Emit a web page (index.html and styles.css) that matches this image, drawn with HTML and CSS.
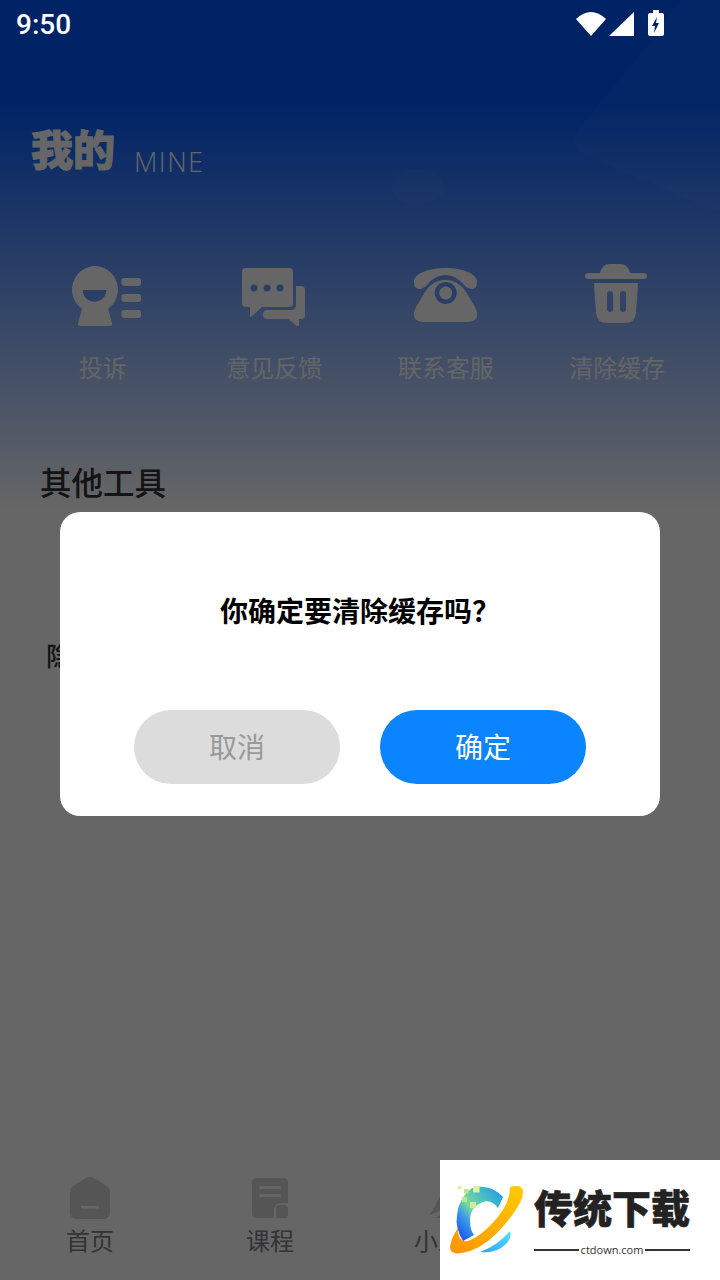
FILE: index.html
```html
<!DOCTYPE html>
<html lang="zh-CN">
<head>
  <meta charset="UTF-8" />
  <meta name="viewport" content="width=device-width, initial-scale=1.0"/>
  <title>我的</title>
  <link rel="stylesheet" href="styles.css">
</head>
<body>
<div class="page">
  <svg class="deco" viewBox="380 0 340 240">
    <path d="M652 40L578 130Q570 145 585 155L720 213V0H680Z" fill="#fff" fill-opacity="0.03"/>
    <ellipse cx="418" cy="187" rx="26" ry="18" fill="#fff" fill-opacity="0.03"/>
  </svg>

  <div class="head">
    <span class="head-title">我的</span>
    <span class="head-sub">MINE</span>
  </div>

  <div class="tools">
    <div class="tool">
      <svg class="tool-icon" viewBox="0 0 80 70">
        <path d="M31.500 3a23.500 23.500 0 0 1 13.500 42.700L49 60q1 3-3 3H18q-4 0-3-3l4-14.300A23.500 23.500 0 0 1 31.500 3z" fill="#fff"/>
        <path d="M19.700 27H43.300a11.800 11.800 0 0 1-23.600 0z" fill="#6a9dff"/>
        <rect x="58.500" y="15" width="19.500" height="8" rx="3" fill="#fff"/>
        <rect x="58.500" y="31" width="19.500" height="8" rx="3" fill="#fff"/>
        <rect x="58.500" y="47" width="19.500" height="8" rx="3" fill="#fff"/>
      </svg>
      <span class="tool-label">投诉</span>
    </div>
    <div class="tool">
      <svg class="tool-icon" viewBox="0 0 80 70">
        <path d="M12 5H55Q59 5 59 9V40Q59 44 55 44H28L18 53Q16 55 16 52V44H12Q8 44 8 40V9Q8 5 12 5z" fill="#fff"/>
        <circle cx="20" cy="25" r="3.500" fill="#6a9dff"/>
        <circle cx="33" cy="25" r="3.500" fill="#6a9dff"/>
        <circle cx="46" cy="25" r="3.500" fill="#6a9dff"/>
        <path d="M62 23H67Q71 23 71 27V52Q71 56 67 56H65V62Q65 64 63 63L54 56H33Q29 56 29 51.500Q29 47 33 47H57Q62 47 62 42z" fill="#fff"/>
      </svg>
      <span class="tool-label">意见反馈</span>
    </div>
    <div class="tool">
      <svg class="tool-icon" viewBox="0 0 80 70">
        <path d="M8 19C8 10 24 5 39.500 5C55 5 71 10 71 19Q71 26 66 26Q62 26 58 22Q50 12 39.500 12Q29 12 21 22Q17 26 13 26Q8 26 8 19z" fill="#fff"/>
        <path d="M39.500 17C50 17 56 23 60 29L69 44Q76 59 60 59H19Q3 59 10 44L19 29C23 23 29 17 39.500 17z" fill="#fff"/>
        <circle cx="39.700" cy="30" r="11" fill="#6a9dff"/>
        <circle cx="39.700" cy="30" r="6.500" fill="#fff"/>
      </svg>
      <span class="tool-label">联系客服</span>
    </div>
    <div class="tool">
      <svg class="tool-icon" viewBox="0 0 80 70">
        <path d="M23 10Q25 1 33 1H43Q51 1 53 10H67Q70 10 70 13T67 16H11Q8 16 8 13T11 10z" fill="#fff"/>
        <path d="M17 20H61L59 50Q58 60 48 60H30Q20 60 19 50z" fill="#fff"/>
        <rect x="30" y="28" width="6" height="21" rx="3" fill="#7aa8ff"/>
        <rect x="43" y="28" width="6" height="21" rx="3" fill="#7aa8ff"/>
      </svg>
      <span class="tool-label">清除缓存</span>
    </div>
  </div>

  <h3 class="section-title">其他工具</h3>
  <div class="other-list">
    <span class="other-item">隐私政策</span>
  </div>

  <div class="tabbar">
    <div class="tab">
      <svg class="tab-icon" viewBox="0 0 44 44">
        <path d="M22 1q2 0 4 1l14 9q2 2 2 4v21q0 7-7 7H9q-7 0-7-7V15q0-2 2-4L18 2q2-1 4-1z" fill="#d4d4d4"/>
        <rect x="13" y="30" width="18" height="2.500" rx="1" fill="#fff"/>
      </svg>
      <span>首页</span>
    </div>
    <div class="tab">
      <svg class="tab-icon" viewBox="0 0 44 44">
        <path d="M9 2h26q5 0 5 5v20h-6q-8 0-8 8v7H9q-5 0-5-5V7q0-5 5-5z" fill="#d4d4d4"/>
        <rect x="28" y="29" width="12" height="13" rx="3.500" fill="#d4d4d4"/>
        <rect x="11" y="10" width="22" height="3" rx="1.500" fill="#fff"/>
        <rect x="11" y="18" width="22" height="3" rx="1.500" fill="#fff"/>
      </svg>
      <span>课程</span>
    </div>
    <div class="tab">
      <svg class="tab-icon" viewBox="0 0 44 44">
        <path d="M22 30L2 39 19 8q3-5 6 0l17 31z" fill="#d4d4d4"/>
        <path d="M7 42l15-9 15 9z" fill="#d4d4d4"/>
      </svg>
      <span>小工具</span>
    </div>
  </div>
</div>

<div class="overlay">
  <div class="dialog">
    <p class="dialog-text">你确定要清除缓存吗？</p>
    <div class="dialog-btns">
      <button class="btn btn-cancel">取消</button>
      <button class="btn btn-ok">确定</button>
    </div>
  </div>
</div>

<div class="statusbar">
  <span class="clock">9:50</span>
  <div class="status-icons">
    <svg class="icon-wifi" width="30" height="24" viewBox="0 0 30 24">
      <path d="M0 7Q15-7 30 7L15 24z" fill="#fff"/>
    </svg>
    <svg class="icon-signal" width="25" height="24" viewBox="0 0 25 24">
      <path d="M25 0v24H0z" fill="#fff"/>
    </svg>
    <svg class="icon-battery" width="16" height="26" viewBox="0 0 16 26">
      <path d="M5 0h6v3h3q2 0 2 2v19q0 2-2 2H2q-2 0-2-2V5q0-2 2-2h3z" fill="#fff"/>
      <path d="M9 7l-5 9h3l-1 7 5-10H8z" fill="#00236a"/>
    </svg>
  </div>
</div>

<div class="watermark">
  <svg class="wm-logo" viewBox="445 1180 85 80">
    <defs>
      <linearGradient id="cGrad" x1="0.9" y1="0.1" x2="0.1" y2="0.9">
        <stop offset="0" stop-color="#22a3e0"/>
        <stop offset="0.55" stop-color="#78dc9c"/>
        <stop offset="0.75" stop-color="#3a9ae8"/>
        <stop offset="1" stop-color="#1f5fe8"/>
      </linearGradient>
      <linearGradient id="ringGrad" x1="0" y1="1" x2="1" y2="0">
        <stop offset="0" stop-color="#ff9400"/>
        <stop offset="1" stop-color="#ffcb00"/>
      </linearGradient>
      <linearGradient id="lowGrad" x1="0" y1="1" x2="1" y2="0">
        <stop offset="0" stop-color="#2f9ff5"/>
        <stop offset="1" stop-color="#54e0ff"/>
      </linearGradient>
    </defs>
    <path d="M472 1188Q490 1183 503 1197L498 1208Q491 1199 483 1202Q470 1207 470 1220Q470 1230 474 1235L463 1241Q455 1228 457 1215Q459 1197 472 1188z" fill="url(#cGrad)"/>
    <path d="M510 1187Q522 1184 523 1191Q524 1204 497 1233Q480 1250 462 1253Q450 1255 450 1247Q451 1238 458 1228Q458 1243 468 1241Q482 1236 497 1218Q510 1203 510 1187z" fill="url(#ringGrad)"/>
    <path d="M480 1252Q497 1246 510 1231Q512 1238 506 1244Q496 1254 480 1252z" fill="url(#lowGrad)"/>
    <rect x="458" y="1186" width="3.500" height="3.500" fill="#e4ee9c"/>
    <rect x="464" y="1189" width="4.500" height="4.500" fill="#b8e88c"/>
    <rect x="473" y="1186" width="6.500" height="6.500" fill="#e0f0a0"/>
    <rect x="462" y="1197" width="5" height="5" fill="#b8e88c"/>
    <rect x="470" y="1202" width="6" height="6" fill="#d0ec98"/>
  </svg>
  <div class="wm-brand">
    <div class="wm-name">传统下载</div>
    <div class="wm-url"><i></i><span>ctdown.com</span><i></i></div>
  </div>
</div>
</body>
</html>
```

FILE: styles.css
```css
* {
  box-sizing: border-box;
}
html, body {
  margin: 0;
  padding: 0;
}
body {
  width: 720px;
  height: 1280px;
  overflow: hidden;
  position: relative;
  font-family: "Noto Sans CJK SC", "Noto Sans", sans-serif;
}
.page {
  height: 1280px;
  position: relative;
  display: flex;
  flex-direction: column;
  background: linear-gradient(180deg, #0058ff 0, #0058ff 100px, #fff 510px);
}
.deco {
  position: absolute;
  top: 0;
  right: 0;
  width: 340px;
  height: 240px;
}
.head {
  display: flex;
  align-items: flex-end;
  gap: 19px;
  padding: 120px 0 0 31px;
  height: 182px;
  color: #fff;
}
.head-title {
  font-size: 42px;
  line-height: 60px;
  font-weight: 900;
  -webkit-text-stroke: 1px #fff;
  margin-bottom: 4px;
}
.head-sub {
  font-family: "Open Sans", sans-serif;
  font-size: 27px;
  line-height: 36px;
  font-weight: 300;
  letter-spacing: 1.5px;
  margin-bottom: 2px;
}
.tools {
  display: grid;
  grid-template-columns: repeat(4, 171.5px);
  padding: 81px 0 0 17px;
}
.tool {
  display: flex;
  flex-direction: column;
  align-items: center;
  color: #fff;
}
.tool-icon {
  width: 80px;
  height: 70px;
}
.tool-label {
  font-size: 24px;
  line-height: 34px;
  margin-top: 17px;
  opacity: 0.95;
}
.section-title {
  margin: 75px 0 0 40px;
  font-size: 31.5px;
  line-height: 44px;
  font-weight: 500;
  color: #333;
}
.other-list {
  padding: 134px 0 0 46px;
}
.other-item {
  font-size: 26px;
  line-height: 36px;
  font-weight: 500;
  color: #333;
}
.tabbar {
  margin-top: auto;
  display: grid;
  grid-template-columns: repeat(3, 180px);
  padding-bottom: 23px;
}
.tab {
  display: flex;
  flex-direction: column;
  align-items: center;
  font-size: 24px;
  line-height: 34px;
  color: #808080;
}
.tab-icon {
  width: 44px;
  height: 44px;
  margin-bottom: 3px;
}
.overlay {
  position: absolute;
  top: 0;
  left: 0;
  width: 720px;
  height: 1280px;
  background: rgba(0, 0, 0, 0.6);
  display: flex;
  justify-content: center;
  align-items: flex-start;
  padding-top: 512px;
}
.dialog {
  width: 600px;
  height: 304px;
  background: #fff;
  border-radius: 20px;
  display: flex;
  flex-direction: column;
  align-items: center;
}
.dialog-text {
  margin: 78px 0 0;
  font-size: 28px;
  line-height: 40px;
  font-weight: 700;
  color: #000;
}
.dialog-btns {
  display: flex;
  gap: 40px;
  margin-top: 80px;
}
.btn {
  width: 206px;
  height: 74px;
  border: none;
  border-radius: 37px;
  font-family: inherit;
  font-size: 28px;
  padding: 0 0 2px;
}
.btn-cancel {
  background: #dcdcdc;
  color: #999;
}
.btn-ok {
  background: #0a84ff;
  color: #fff;
}
.statusbar {
  position: absolute;
  top: 0;
  left: 0;
  width: 720px;
  height: 50px;
  display: flex;
  justify-content: space-between;
  padding: 5px 56px 0 16px;
  color: #fff;
}
.clock {
  font-family: Roboto, sans-serif;
  font-size: 28px;
  line-height: 40px;
  font-weight: 500;
}
.status-icons {
  display: flex;
  padding-top: 5px;
  align-items: flex-start;
}
.icon-wifi, .icon-signal {
  margin-top: 2px;
}
.icon-signal {
  margin-left: 3px;
}
.icon-battery {
  margin-left: 14px;
}
.watermark {
  position: absolute;
  right: 0;
  bottom: 0;
  width: 280px;
  height: 120px;
  background: #fff;
  display: flex;
  padding: 20px 0 0 5px;
}
.wm-logo {
  width: 85px;
  height: 80px;
  flex: none;
}
.wm-brand {
  margin-left: 4px;
  width: 156px;
  color: #222;
}
.wm-name {
  font-size: 39px;
  line-height: 52px;
  font-weight: 900;
  -webkit-text-stroke: 0.6px #222;
  white-space: nowrap;
}
.wm-url {
  display: flex;
  align-items: center;
  gap: 2px;
  font-family: "Open Sans", sans-serif;
  font-size: 11px;
  line-height: 16px;
  margin-top: 10px;
  color: #333;
}
.wm-url i {
  flex: 1;
  height: 2px;
  background: #333;
}
```
